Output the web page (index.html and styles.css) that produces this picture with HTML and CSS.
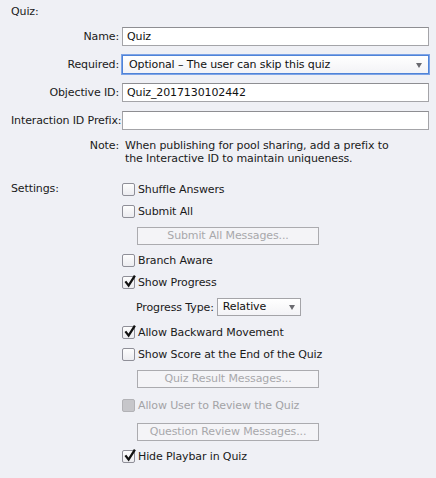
FILE: index.html
```html
<!DOCTYPE html>
<html>
<head>
<meta charset="utf-8">
<link rel="stylesheet" href="styles.css">
</head>
<body>
<div class="panel">
  <div class="heading">Quiz:</div>
  <div class="form">
    <div class="lbl">Name:</div>
    <div class="field">Quiz</div>
    <div class="lbl">Required:</div>
    <div class="select focus"><span>Optional – The user can skip this quiz</span><span class="arrow"></span></div>
    <div class="lbl">Objective ID:</div>
    <div class="field">Quiz_2017130102442</div>
    <div class="lbl">Interaction ID Prefix:</div>
    <div class="field"></div>
    <div class="lbl note-lbl">Note:</div>
    <div class="note">When publishing for pool sharing, add a prefix to<br>the Interactive ID to maintain uniqueness.</div>
  </div>
  <div class="settings">
    <div class="settings-lbl">Settings:</div>
    <div class="options">
      <div class="opt"><span class="cb"></span>Shuffle Answers</div>
      <div class="opt"><span class="cb"></span>Submit All</div>
      <div class="btn-row"><div class="btn">Submit All Messages...</div></div>
      <div class="opt"><span class="cb"></span>Branch Aware</div>
      <div class="opt"><span class="cb"><svg class="check" viewBox="0 0 14 14" width="14" height="14"><path d="M2.4 6.4 L5.6 10.6 L11.9 0.6" fill="none" stroke="#111" stroke-width="2.3"/></svg></span>Show Progress</div>
      <div class="ptype-row"><span>Progress Type:</span><div class="select small"><span>Relative</span><span class="arrow"></span></div></div>
      <div class="opt"><span class="cb"><svg class="check" viewBox="0 0 14 14" width="14" height="14"><path d="M2.4 6.4 L5.6 10.6 L11.9 0.6" fill="none" stroke="#111" stroke-width="2.3"/></svg></span>Allow Backward Movement</div>
      <div class="opt"><span class="cb"></span>Show Score at the End of the Quiz</div>
      <div class="btn-row"><div class="btn">Quiz Result Messages...</div></div>
      <div class="opt disabled tall"><span class="cb"></span>Allow User to Review the Quiz</div>
      <div class="btn-row"><div class="btn">Question Review Messages...</div></div>
      <div class="opt"><span class="cb"><svg class="check" viewBox="0 0 14 14" width="14" height="14"><path d="M2.4 6.4 L5.6 10.6 L11.9 0.6" fill="none" stroke="#111" stroke-width="2.3"/></svg></span>Hide Playbar in Quiz</div>
    </div>
  </div>
</div>
</body>
</html>
```

FILE: styles.css
```css
html, body {
  margin: 0;
  padding: 0;
  background: #eff0f5;
}
body {
  font-family: "DejaVu Sans", "Liberation Sans", sans-serif;
  font-size: 11px;
  letter-spacing: -0.12px;
  color: #1a1a1a;
}
.panel {
  padding: 5px 7px 0 11px;
}
.heading {
  height: 14px;
  line-height: 14px;
}
.form {
  margin-top: 8px;
  display: grid;
  grid-template-columns: 108px 1fr;
  column-gap: 3px;
  row-gap: 9px;
  align-items: center;
}
.lbl {
  text-align: right;
  white-space: nowrap;
  line-height: 19px;
}
.note-lbl {
  align-self: start;
  line-height: 13px;
}
.field {
  height: 19px;
  box-sizing: border-box;
  border: 1px solid #a4a4a8;
  border-top-color: #8e8e92;
  background: #fff;
  padding: 0 4px;
  line-height: 17px;
  color: #111;
}
.select {
  position: relative;
  box-sizing: border-box;
  background: linear-gradient(#ffffff, #f3f3f6);
  border: 1px solid #a4a4a8;
  color: #111;
}
.select.focus {
  height: 19px;
  line-height: 17px;
  padding: 0 6px;
  border-color: #4f83d8;
  box-shadow: 0 0 0 1px #7ea4e6;
}
.select .arrow {
  position: absolute;
  right: 6px;
  top: 7px;
  width: 0;
  height: 0;
  border-left: 3.5px solid transparent;
  border-right: 3.5px solid transparent;
  border-top: 5px solid #6a6a70;
}
.note {
  align-self: start;
  padding-left: 3px;
  line-height: 13px;
  white-space: nowrap;
}
.settings {
  margin-top: 13px;
  display: grid;
  grid-template-columns: 108px 1fr;
  column-gap: 3px;
}
.settings-lbl {
  line-height: 22px;
}
.options {
  display: flex;
  flex-direction: column;
}
.opt {
  height: 22px;
  display: flex;
  align-items: center;
  white-space: nowrap;
}
.opt.tall {
  height: 26px;
}
.cb {
  position: relative;
  width: 13px;
  height: 13px;
  box-sizing: border-box;
  border: 1px solid #8f8f98;
  border-radius: 2px;
  background: linear-gradient(#fdfdfd, #ececf0);
  margin-right: 3px;
  flex: none;
}
.check {
  position: absolute;
  left: 0;
  top: -2px;
  overflow: visible;
}
.opt.disabled {
  color: #a3a3a6;
}
.opt.disabled .cb {
  background: #c6c6ca;
  border-color: #b2b2b6;
}
.btn-row {
  height: 27px;
  display: flex;
  align-items: center;
  padding-left: 15px;
}
.btn {
  width: 182px;
  height: 18px;
  box-sizing: border-box;
  border: 1px solid #ababaf;
  background: #f4f4f7;
  color: #a8a8ab;
  text-align: center;
  line-height: 16px;
  white-space: nowrap;
}
.ptype-row {
  height: 28px;
  display: flex;
  align-items: center;
  padding-left: 14px;
  white-space: nowrap;
}
.select.small {
  margin-left: 3px;
  width: 84px;
  height: 18px;
  line-height: 16px;
  padding: 0 5px;
}
.select.small .arrow {
  right: 5px;
  top: 6px;
}
```
